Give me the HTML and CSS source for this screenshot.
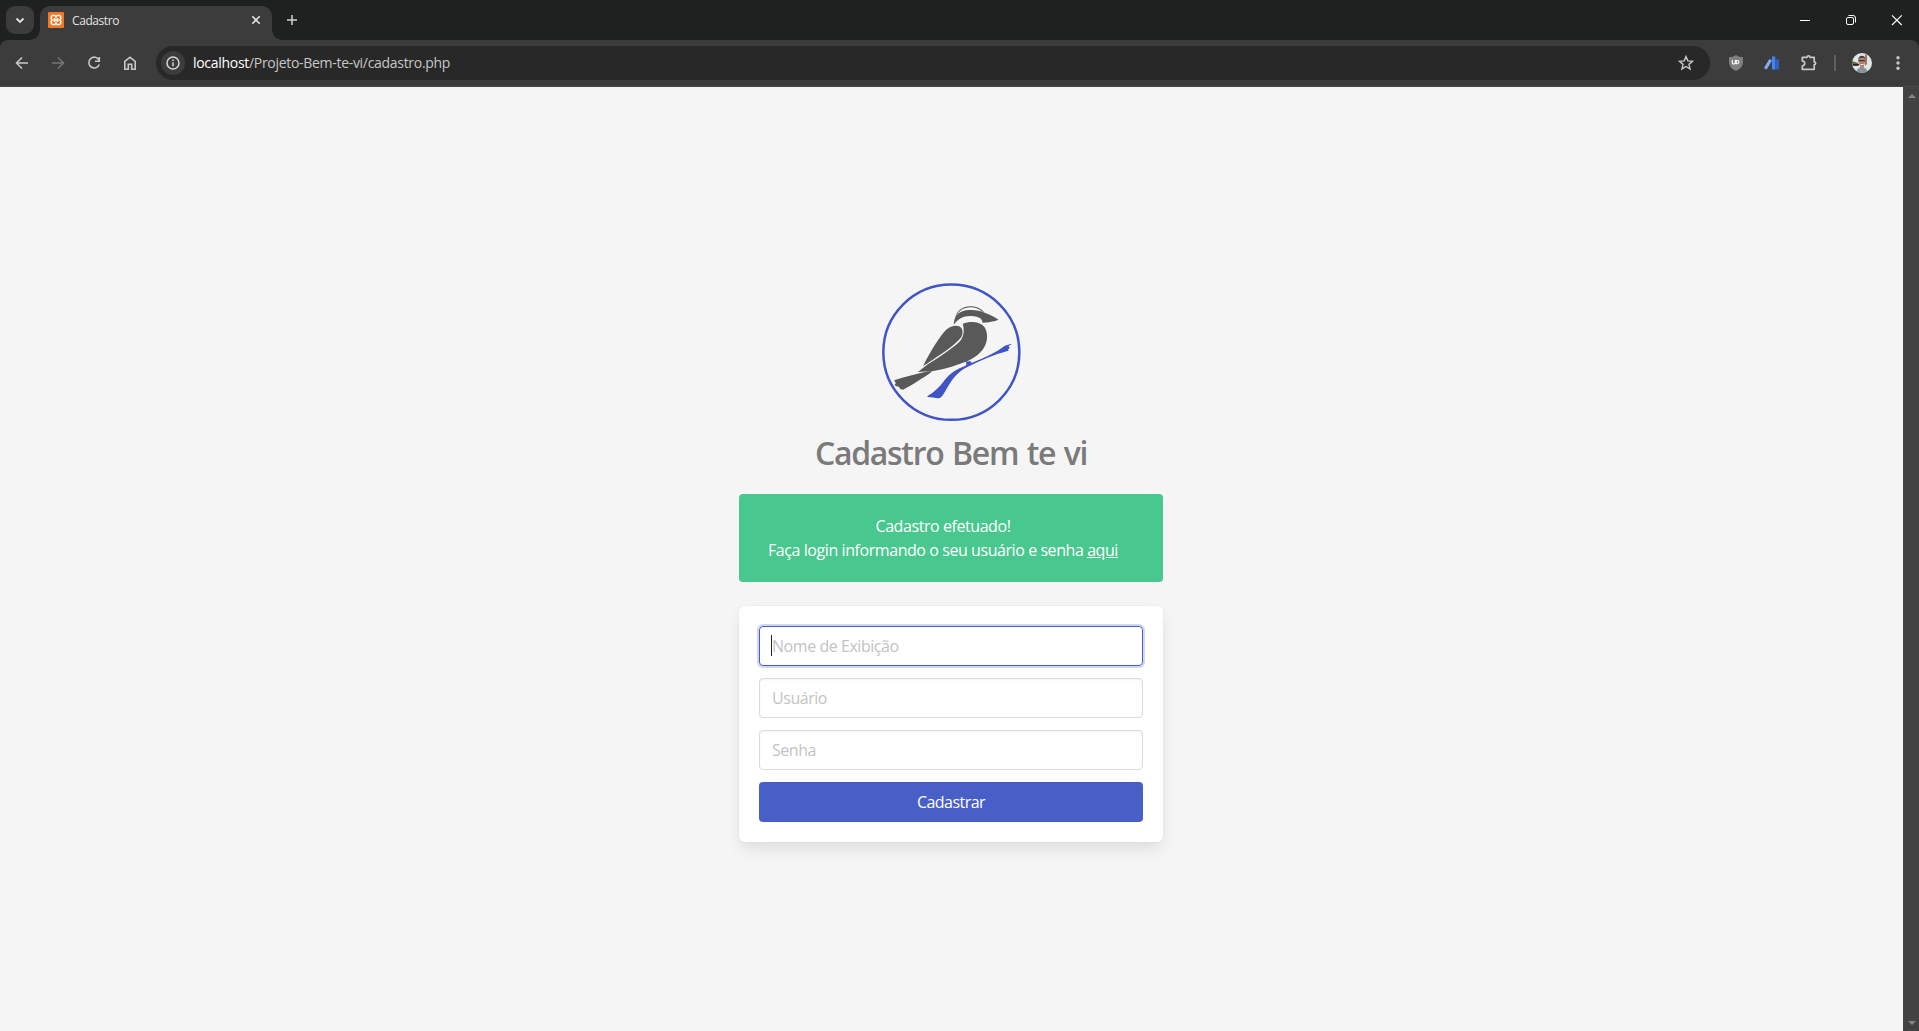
FILE: index.html
```html
<!DOCTYPE html>
<html lang="pt-BR">
<head>
<meta charset="utf-8">
<title>Cadastro</title>
<link rel="stylesheet" href="styles.css">
</head>
<body>
<header class="tabstrip">
  <div class="tab-search"><svg width="28" height="28" viewBox="0 0 28 28"><path d="M10.500 12.500 14 16l3.500-3.500" fill="none" stroke="#e3e3e3" stroke-width="1.800"/></svg></div>
  <div class="tab">
    <svg class="favicon" width="16" height="16" viewBox="0 0 16 16"><rect width="16" height="16" rx="1" fill="#f37623"/><path d="M8 5C7.500 3.500 6.500 3.300 5.300 3.300 3 3.300 2.300 6.500 4.200 8 2.300 9.500 3 12.700 5.300 12.700 6.500 12.700 7.500 12.500 8 11 8.500 12.500 9.500 12.700 10.700 12.700 13 12.700 13.700 9.500 11.800 8 13.700 6.500 13 3.300 10.700 3.300 9.500 3.300 8.500 3.500 8 5zM6.300 8h3.400M6.300 6v4M9.700 6v4" fill="none" stroke="#fff" stroke-width="1.500"/></svg>
    <span class="tab-title">Cadastro</span>
    <svg class="tab-close" width="16" height="16" viewBox="0 0 16 16"><path d="M4.300 4.300 11.700 11.700M11.700 4.300 4.300 11.700" stroke="#e3e3e3" stroke-width="1.600"/></svg>
  </div>
  <svg class="new-tab" width="16" height="16" viewBox="0 0 16 16"><path d="M8 3v10M3 8h10" stroke="#d0d0d0" stroke-width="1.500"/></svg>
  <div class="window-controls">
    <svg width="46" height="40" viewBox="0 0 46 40"><path d="M18 20.500h10" stroke="#fff"/></svg>
    <svg width="46" height="40" viewBox="0 0 46 40"><g fill="none" stroke="#fff"><rect x="18.500" y="17.500" width="7" height="7" rx="1.500"/><path d="M20.500 15.500H25a2.500 2.500 0 0 1 2.500 2.500v4.500"/></g></svg>
    <svg width="46" height="40" viewBox="0 0 46 40"><path d="M18 15.300l9.700 9.700M27.700 15.300 18 25" stroke="#fff" stroke-width="1.150"/></svg>
  </div>
</header>
<nav class="toolbar">
  <div class="nav-buttons">
    <svg width="20" height="20" viewBox="0 0 20 20"><path d="M16 10H5M10 4.500 4.500 10l5.500 5.500" fill="none" stroke="#c7c7c7" stroke-width="1.600"/></svg>
    <svg width="20" height="20" viewBox="0 0 20 20"><path d="M4 10h11M10 4.500l5.500 5.500-5.500 5.500" fill="none" stroke="#757575" stroke-width="1.600"/></svg>
    <svg width="20" height="20" viewBox="0 0 20 20"><path d="M15 7A5.400 5.400 0 1 0 15.300 11.500M15.300 4v4.300H11" fill="none" stroke="#c7c7c7" stroke-width="1.600"/></svg>
    <svg width="20" height="20" viewBox="0 0 20 20"><path d="M4.800 8.300 10 4.300l5.200 4v7.900h-3.500v-5H8.300v5H4.800z" fill="none" stroke="#c7c7c7" stroke-width="1.600"/></svg>
  </div>
  <div class="omnibox">
    <div class="site-info"><svg width="24" height="24" viewBox="0 0 24 24"><circle cx="12" cy="12" r="6" fill="none" stroke="#d6d6d6" stroke-width="1.500"/><path d="M12 11.200v4M12 8.500v1.500" stroke="#d6d6d6" stroke-width="1.500"/></svg></div>
    <p class="url"><span class="host">localhost</span>/Projeto-Bem-te-vi/cadastro.php</p>
    <svg class="star" width="20" height="20" viewBox="0 0 20 20"><path d="M10 3.600l1.850 4.300 4.650.4-3.550 3.050 1.100 4.600L10 13.500 5.950 15.950 7.050 11.350 3.500 8.300l4.650-.4z" fill="none" stroke="#c7c7c7" stroke-width="1.400"/></svg>
  </div>
  <div class="extensions">
    <svg class="shield" width="16" height="18" viewBox="0 0 16 18"><path d="M8 1c2 1.700 4.500 2 7 2v5c0 4.500-3.500 7.500-7 9-3.500-1.500-7-4.500-7-9V3c2.500 0 5-.3 7-2z" fill="#808080"/><path d="M4.300 6v2.600a1.500 1.500 0 0 0 3 0V6M8.300 6.500v3.200h1a1.600 1.600 0 0 0 0-3.200z" fill="none" stroke="#fff" stroke-width="1.100"/></svg>
    <svg class="bars" width="16" height="16" viewBox="0 0 16 16"><path d="M5.300 4 8 5.600 2.700 14.500 0 13z" fill="#80adf8"/><path d="M8 1.500h3.200v13H8z" fill="#4285f4"/><path d="M11.200 4.500h3.800v10h-3.800z" fill="#2d62bd"/></svg>
    <svg class="puzzle" width="20" height="20" viewBox="0 0 20 20"><path d="M3.300 4.300h4.800a1.400 1.400 0 0 1 2.800 0h4.300v4.500a1.400 1.400 0 0 1 0 2.800v4.700H3.300v-3.500a2.400 2.400 0 0 0 0-4.800z" fill="none" stroke="#c7c7c7" stroke-width="1.700" stroke-linejoin="round"/></svg>
    <i class="separator"></i>
    <svg class="avatar" width="20" height="20" viewBox="0 0 20 20"><defs><clipPath id="av"><circle cx="10" cy="10" r="10"/></clipPath></defs><g clip-path="url(#av)"><path fill="#dce8e6" d="M0 0h20v20H0z"/><path d="M0 8l6 2v3H0z" fill="#67684e"/><path d="M1 11h6v1.500H1z" fill="#292724"/><path d="M13 1l2 1v9l-2 2z" fill="#a77768"/><path d="M4.500 20c0-4 2-5.500 5.500-5.500s5.500 1.500 5.500 5.500z" fill="#8295a1"/><path d="M8 11h4v4l-2 2-2-2z" fill="#b38476"/><ellipse cx="9.800" cy="8.300" rx="3.400" ry="4.800" fill="#b18272"/><path d="M6.200 7C6 2 13.500 1 13.500 7L12 4.800H8z" fill="#473532"/><path d="M6.500 7h6.700v1.200H6.500z" fill="#403a3b"/><path d="M8.500 11h3v1h-3z" fill="#eee"/></g></svg>
    <svg class="dots" width="20" height="20" viewBox="0 0 20 20" fill="#c7c7c7"><circle cx="10" cy="4.700" r="1.700"/><circle cx="10" cy="10" r="1.700"/><circle cx="10" cy="15.300" r="1.700"/></svg>
  </div>
</nav>
<div class="viewport">
  <main class="page">
    <svg class="logo" width="160" height="155" viewBox="1.500 0 480 465">
      <ellipse cx="242.500" cy="231.500" rx="204" ry="203" fill="none" stroke="#3f55c6" stroke-width="7.500"/>
      <g fill="#595959">
        <path d="M250 149C250 126 263 110 286 106C307 103 325 105 343 113C358 119 373 125 384 134C372 139 354 142 336 143C336 129 321 124 302 123C279 122 262 132 250 149z"/>
        <path d="M254 132C256 108 277 94 299 94C319 94 334 102 341 112L334 109C320 96 300 95 285 99C269 104 259 115 254 132z"/>
        <path d="M277 146C300 137 326 140 339 153C353 168 353 197 341 217C329 239 303 255 273 265C246 275 213 285 187 288L142 291L172 268C204 248 244 221 263 204C279 190 283 171 277 146z"/>
        <path d="M158 273C176 236 199 198 220 172C233 156 249 149 266 154C276 159 280 174 272 187C253 212 215 235 186 255C174 263 166 269 158 273z"/>
        <path d="M186 289C160 308 125 330 98 344L89 342L85 335L77 334L72 329L76 325L71 316C102 306 138 296 174 289z"/>
      </g>
      <path d="M171 363C191 352 207 337 222 316C239 293 261 281 285 272L288 268L285 256L292 260L299 257L301 262L305 263C337 250 377 233 403 212L422 206L423 208L414 213L418 219L413 223L414 227C369 239 328 257 289 277C266 288 250 307 237 327C226 344 221 359 209 369C198 371 184 366 171 366z" fill="#3f55c6"/>
    </svg>
    <h1 class="title">Cadastro Bem te vi</h1>
    <section class="notification">
      <p class="line">Cadastro efetuado!</p>
      <p class="line">Faça login informando o seu usuário e senha <a class="link">aqui</a></p>
    </section>
    <form class="box">
      <div class="input focused"><i class="caret"></i><span>Nome de Exibição</span></div>
      <div class="input"><span>Usuário</span></div>
      <div class="input"><span>Senha</span></div>
      <button class="submit" type="button">Cadastrar</button>
    </form>
  </main>
  <aside class="scrollbar"><i class="arrow up"></i><i class="arrow down"></i></aside>
</div>
</body>
</html>
```
FILE: styles.css
```css
* { box-sizing: border-box; }
body { margin: 0; height: 1031px; overflow: hidden; display: flex; flex-direction: column; background: #1f2120; font-family: "Open Sans", "Noto Sans", sans-serif; }
svg { display: block; flex: none; }
p, h1 { margin: 0; white-space: nowrap; }

.tabstrip { height: 40px; flex: none; display: flex; padding-left: 6px; background: #1f2120; }
.tab-search { width: 28px; height: 28px; margin-top: 6px; border-radius: 9px; background: #3c3c3c; }
.tab { position: relative; width: 232px; height: 34px; margin: 6px 0 0 6px; padding: 0 8px; display: flex; align-items: center; background: #3c3c3c; border-radius: 10px 10px 0 0; }
.tab::before, .tab::after { content: ""; position: absolute; bottom: 0; width: 10px; height: 10px; }
.tab::before { left: -10px; background: radial-gradient(circle at 0 0, transparent 9.5px, #3c3c3c 10px); }
.tab::after { right: -10px; background: radial-gradient(circle at 100% 0, transparent 9.5px, #3c3c3c 10px); }
.favicon { margin: -6px 8px 0 0; }
.tab-title { flex: 1; margin-top: -6px; font-size: 12px; letter-spacing: -.42px; color: #e3e3e3; }
.tab-close { margin: -6px 0 0; }
.new-tab { margin: 12px 0 0 12px; }
.window-controls { display: flex; margin-left: auto; margin-right: -1px; }

.toolbar { height: 47px; flex: none; display: flex; align-items: center; padding: 0 11px 1px 12px; background: #3c3c3c; border-radius: 8px 8px 0 0; border-bottom: 1px solid #484848; }
.nav-buttons { display: flex; gap: 16px; }
.omnibox { width: 1554px; height: 34px; flex: none; margin-left: 16px; padding: 0 14px 0 5px; display: flex; align-items: center; background: #282828; border-radius: 17px; }
.site-info { width: 24px; height: 24px; border-radius: 50%; background: #3c3c3c; }
.url { flex: 1; margin-left: 8px; padding-top: 1px; font-size: 14px; line-height: 20px; letter-spacing: -.3px; color: #c7c7c7; }
.host { color: #fff; }
.extensions { flex: 1; display: flex; align-items: center; }
.shield { margin-left: 18px; }
.bars { margin-left: 20px; }
.puzzle { margin-left: 19px; }
.separator { width: 2px; height: 16px; margin-left: 15px; background: #5e5e5e; }
.avatar { margin-left: 16px; }
.dots { margin-left: auto; }

.viewport { flex: 1; display: flex; min-height: 0; }
.page { flex: 1; display: flex; flex-direction: column; align-items: center; padding: 188px 1px 0 0; background: #f5f5f5; }
.title { height: 36px; margin-top: 5px; font-size: 32px; line-height: 36px; font-weight: 600; letter-spacing: -1.3px; word-spacing: 1.5px; color: #7a7a7a; }
.notification { width: 424px; height: 88px; margin-top: 23px; padding: 20px 40px 20px 24px; border-radius: 4px; background: #48c78e; color: #fff; font-size: 16px; line-height: 24px; display: flex; flex-direction: column; align-items: center; }
.line { letter-spacing: -.43px; }
.link { text-decoration: underline; }
.box { width: 424px; height: 236px; margin-top: 24px; padding: 20px; display: flex; flex-direction: column; gap: 12px; border-radius: 6px; background: #fff; box-shadow: 0 8px 16px -2px rgba(10, 10, 10, .1), 0 0 0 1px rgba(10, 10, 10, .02); }
.input { position: relative; height: 40px; padding: 0 12px; border: 1px solid #dbdbdb; border-radius: 4px; box-shadow: inset 0 1px 2px rgba(10, 10, 10, .05); color: #c3c3c3; font-size: 16px; line-height: 38px; letter-spacing: -.45px; white-space: nowrap; }
.focused { border-color: #485fc7; box-shadow: 0 0 0 2px rgba(72, 95, 199, .25); }
.caret { position: absolute; left: 11px; top: 8px; width: 1px; height: 21px; background: #222; }
.submit { height: 40px; border: 0; border-radius: 4px; background: #485fc7; color: #fff; font: 16px/24px "Open Sans", "Noto Sans", sans-serif; letter-spacing: -.55px; }
.scrollbar { width: 16px; display: flex; flex-direction: column; justify-content: space-between; align-items: center; padding: 7px 0 6px 1px; background: #424242; }
.arrow { width: 0; height: 0; border: 4px solid transparent; }
.up { border-top: 0; border-bottom-color: #858585; }
.down { border-bottom: 0; border-top-color: #858585; }
```
